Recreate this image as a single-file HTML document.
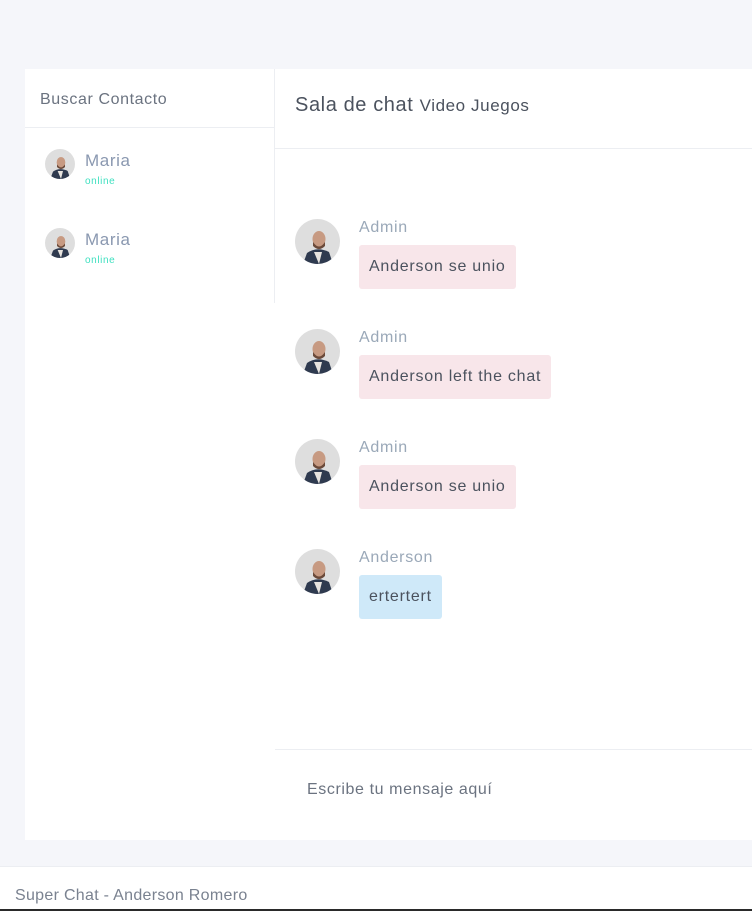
<!DOCTYPE html>
<html><head><meta charset="utf-8"><style>
*{margin:0;padding:0;box-sizing:border-box}
body{width:752px;height:911px;background:#f5f6fa;font-family:"Liberation Sans",sans-serif;position:relative;overflow:hidden}
.abs{position:absolute}
.side{left:25px;top:69px;width:250px;height:771px;background:#fff}
.chat{left:275px;top:69px;width:477px;height:771px;background:#fff}
.t{position:absolute;white-space:nowrap;letter-spacing:0.6px}
.bub{position:absolute;left:359px;height:44px;border-radius:3px;background:#f8e6ea;color:#4b525e;font-size:16px;line-height:44px;padding:0 10px;letter-spacing:0.75px;white-space:nowrap}
.name{position:absolute;left:359px;color:#9aa8b8;font-size:16px;letter-spacing:0.7px}
</style></head><body>
<svg width="0" height="0" style="position:absolute"><defs>
<symbol id="av" viewBox="0 0 45 45">
<clipPath id="c"><circle cx="22.5" cy="22.5" r="22.5"/></clipPath>
<g clip-path="url(#c)">
<rect width="45" height="45" fill="#dedede"/>
<path d="M8 45 L12 34 Q22 27 34 33 L38 45Z" fill="#2f3a4f"/>
<path d="M19 33 L24 45 L27 33Z" fill="#e8e4df"/>
<ellipse cx="24" cy="20" rx="6.5" ry="8" fill="#c79a82"/>
<path d="M18 23 Q24 32 30 23 L30 27 Q24 33 18 27Z" fill="#6b4a3a"/>
</g></symbol></defs></svg>

<div class="abs side"></div>
<div class="abs" style="left:25px;top:127px;width:250px;height:1px;background:#eceef2"></div>
<div class="abs" style="left:274px;top:69px;width:1px;height:234px;background:#eceef2"></div>
<div class="abs chat"></div>
<div class="abs" style="left:275px;top:148px;width:477px;height:1px;background:#eceef2"></div>
<div class="abs" style="left:275px;top:749px;width:477px;height:1px;background:#eceef2"></div>

<div class="t" style="left:40px;top:91px;font-size:16px;color:#6b7380">Buscar Contacto</div>

<svg class="abs" style="left:45px;top:149px" width="30" height="30"><use href="#av"/></svg>
<div class="t" style="left:85px;top:151px;font-size:17px;color:#8a98b0">Maria</div>
<div class="t" style="left:85px;top:176px;font-size:10px;color:#3fe0c0">online</div>
<svg class="abs" style="left:45px;top:228px" width="30" height="30"><use href="#av"/></svg>
<div class="t" style="left:85px;top:230px;font-size:17px;color:#8a98b0">Maria</div>
<div class="t" style="left:85px;top:255px;font-size:10px;color:#3fe0c0">online</div>

<div class="t" style="left:295px;top:94px;font-size:20px;color:#4b525e">Sala de chat <span style="font-size:17px">Video Juegos</span></div>

<svg class="abs" style="left:295px;top:219px" width="45" height="45"><use href="#av"/></svg>
<div class="name" style="top:219px">Admin</div>
<div class="bub" style="top:245px">Anderson se unio</div>

<svg class="abs" style="left:295px;top:329px" width="45" height="45"><use href="#av"/></svg>
<div class="name" style="top:329px">Admin</div>
<div class="bub" style="top:355px">Anderson left the chat</div>

<svg class="abs" style="left:295px;top:439px" width="45" height="45"><use href="#av"/></svg>
<div class="name" style="top:439px">Admin</div>
<div class="bub" style="top:465px">Anderson se unio</div>

<svg class="abs" style="left:295px;top:549px" width="45" height="45"><use href="#av"/></svg>
<div class="name" style="top:549px">Anderson</div>
<div class="bub" style="top:575px;background:#cfe9f9">ertertert</div>

<div class="t" style="left:307px;top:781px;font-size:16px;color:#6b7380">Escribe tu mensaje aquí</div>

<div class="abs" style="left:0;top:866px;width:752px;height:45px;background:#fff;border-top:1px solid #eceef2"></div>
<div class="t" style="left:15px;top:887px;font-size:16px;color:#7a8290;letter-spacing:0.3px">Super Chat - Anderson Romero</div>
<div class="abs" style="left:0;top:909px;width:752px;height:2px;background:#2a2a2a"></div>
</body></html>
